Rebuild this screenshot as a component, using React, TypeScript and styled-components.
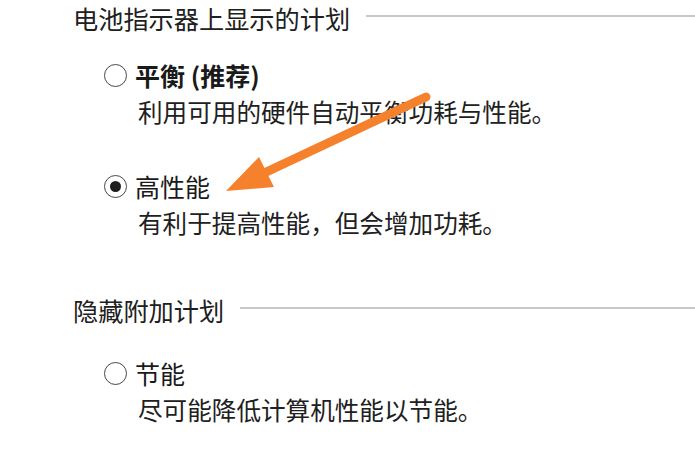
import React from "react";
import styled, { createGlobalStyle } from "styled-components";

const Global = createGlobalStyle`
  html, body { margin: 0; padding: 0; background: #ffffff; }
  body { font-family: "Noto Sans CJK SC", "Noto Sans", sans-serif; color: #1c1c1c; }
`;

const Page = styled.div`
  position: relative;
  width: 695px;
  height: 451px;
  overflow: hidden;
  padding-left: 73px;
  box-sizing: border-box;
`;

const Section = styled.section<{ $top: number }>`
  margin-top: ${(p) => p.$top}px;
`;

const Heading = styled.div`
  display: flex;
  align-items: center;
  gap: 16px;
  height: 36px;
  font-size: 25.2px;
  line-height: 36px;
  color: #202020;
`;

const Rule = styled.div`
  flex: 1;
  height: 2px;
  background: #c9c9c9;
  margin-top: -4px;
`;

const Option = styled.div<{ $top: number }>`
  margin-top: ${(p) => p.$top}px;
  padding-left: 31px;
`;

const TitleRow = styled.label`
  display: flex;
  align-items: center;
  gap: 8px;
  height: 36px;
  font-size: 25px;
  line-height: 36px;
`;

const Title = styled.span<{ $bold?: boolean }>`
  font-weight: ${(p) => (p.$bold ? 700 : 400)};
  color: #1a1a1a;
`;

const Radio = styled.span<{ $checked?: boolean }>`
  width: 23px;
  height: 23px;
  box-sizing: border-box;
  border-radius: 50%;
  border: 1.8px solid #474747;
  display: flex;
  align-items: center;
  justify-content: center;
  flex-shrink: 0;
  &::after {
    content: "";
    display: ${(p) => (p.$checked ? "block" : "none")};
    width: 11px;
    height: 11px;
    border-radius: 50%;
    background: #1e1e1e;
  }
`;

const Desc = styled.div`
  padding-left: 34px;
  height: 36px;
  font-size: 24.6px;
  line-height: 36px;
  color: #202020;
`;

const Overlay = styled.svg`
  position: absolute;
  left: 0;
  top: 0;
  pointer-events: none;
`;

export default function App() {
  return (
    <>
      <Global />
      <Page>
        <Section $top={0}>
          <Heading>
            <span>电池指示器上显示的计划</span>
            <Rule />
          </Heading>
          <Option $top={21}>
            <TitleRow>
              <Radio />
              <Title $bold>平衡 (推荐)</Title>
            </TitleRow>
            <Desc>利用可用的硬件自动平衡功耗与性能。</Desc>
          </Option>
          <Option $top={39}>
            <TitleRow>
              <Radio $checked />
              <Title>高性能</Title>
            </TitleRow>
            <Desc>有利于提高性能，但会增加功耗。</Desc>
          </Option>
        </Section>
        <Section $top={52}>
          <Heading>
            <span>隐藏附加计划</span>
            <Rule />
          </Heading>
          <Option $top={27}>
            <TitleRow>
              <Radio />
              <Title>节能</Title>
            </TitleRow>
            <Desc>尽可能降低计算机性能以节能。</Desc>
          </Option>
        </Section>
        <Overlay width="695" height="451" viewBox="0 0 695 451">
          <line x1="426" y1="97" x2="262" y2="174" stroke="#f5812c" strokeWidth="9" strokeLinecap="round" />
          <polygon points="226,191 259,157 274,187" fill="#f5812c" />
        </Overlay>
      </Page>
    </>
  );
}
